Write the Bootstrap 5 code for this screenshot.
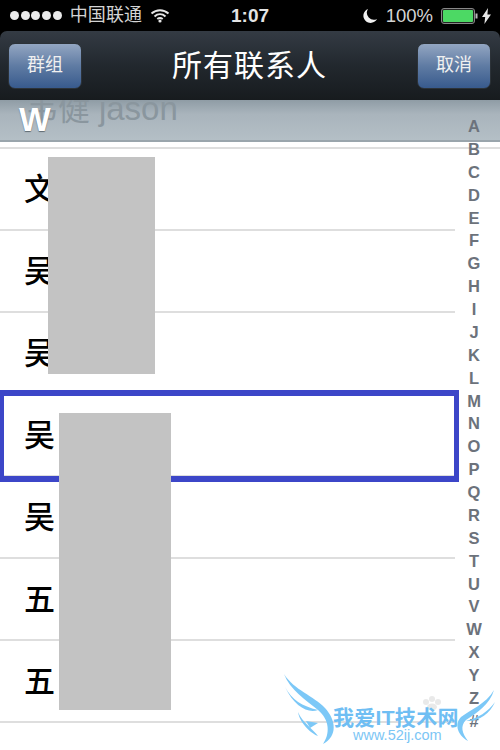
<!DOCTYPE html>
<html lang="zh-CN">
  <head>
    <meta charset="UTF-8" />
    <meta name="viewport" content="width=device-width, initial-scale=1.0" />
    <title>所有联系人</title>
    <link
      href="https://cdn.jsdelivr.net/npm/bootstrap@5.3.0/dist/css/bootstrap.min.css"
      rel="stylesheet"
    />
    <style>
      html, body { height: 750px; overflow: hidden; }
      body {
        position: relative;
        background: #fff;
        font-family: "Liberation Sans", "Noto Sans CJK SC", sans-serif;
      }
      .status-bar {
        height: 31px;
        background: #000;
        color: #d4d4d4;
        padding: 0 9px 0 10px;
        font-size: 18px;
      }
      .sig-dots { display: flex; gap: 1.7px; }
      .sig-dot { width: 9px; height: 9px; border-radius: 50%; background: #eaeaea; }
      .carrier { margin-left: 8px; letter-spacing: 0.1px; }
      .clock-text {
        position: absolute; left: 0; right: 0; top: 3px;
        text-align: center; font-size: 19px; font-weight: 700; color: #e4e4e4; line-height: 26px;
      }
      .pct-text { font-size: 18.5px; }
      .top-bar { height: 69px; background: #000; }
      .top-bar-inner {
        height: 69px;
        padding: 0 9px 0 8px;
        border-radius: 7px 7px 0 0;
        background: linear-gradient(#343b44, #22282e 50%, #171b1e);
      }
      .bar-btn {
        width: 74px; height: 46px;
        border: 1px solid #2c3238;
        border-radius: 7px;
        background: linear-gradient(#93a6c2, #5f7ba3 50%, #385a8d);
        color: #f0f0f0;
        font-size: 18px;
        padding: 0;
      }
      .bar-title { color: #fff; font-size: 30px; line-height: 40px; letter-spacing: 1px; }
      .section-head {
        height: 42px;
        overflow: hidden;
        position: relative;
        background: linear-gradient(#8f9ca5, #a9b4bc 35%, #b4bfc6);
        border-bottom: 2px solid #9aa5ac;
      }
      .ghost-name {
        position: absolute; left: 26px; top: -11px;
        font-size: 32px; line-height: 40px; color: #8a969e;
        white-space: nowrap;
      }
      .ghost-name span { font-size: 33px; }
      .section-letter {
        position: absolute; left: 19px; top: 1px;
        font-size: 33.5px; font-weight: 700; line-height: 38px;
        color: #fff; text-shadow: 0 1px 1px #5f6a72;
      }
      .contact-list { margin-top: 5px; border-top: 2px solid #dedede; }
      .contact-row {
        height: 82px;
        margin-right: 45px;
        padding: 1px 0 0 24px;
        font-size: 31px;
        font-weight: 500;
        line-height: 40px;
        color: #000;
        white-space: nowrap;
        border-bottom: 2px solid #dedede;
      }
      .contact-row.row-low { padding-top: 7px; }
      .picked-box {
        position: absolute; left: 0; top: 390px;
        width: 459px; height: 92px;
        border: 6px solid #3c46c8;
        border-left-width: 4px;
        border-right-width: 5px;
      }
      .blank-a, .blank-b { position: absolute; background: #c3c3c3; }
      .blank-a { left: 48px; top: 157px; width: 107px; height: 217px; }
      .blank-b { left: 59px; top: 413px; width: 112px; height: 297px; }
      .index-col {
        position: absolute; left: 459px; width: 30px; top: 115px;
        font-size: 16.5px; font-weight: 700; line-height: 22.88px;
        text-align: center; color: #6c727b;
      }
      .mark-wings { position: absolute; left: 280px; top: 670px; }
      .mark-title {
        position: absolute; left: 333px; top: 704px;
        font-size: 21px; font-weight: 700; line-height: 28px; letter-spacing: 0.3px;
        color: #6fbef3; white-space: nowrap;
      }
      .mark-url {
        position: absolute; left: 353px; top: 726px;
        font-size: 14.5px; line-height: 18px;
        color: #7cc6f5; white-space: nowrap;
      }
    </style>
  </head>
  <body>
    <div class="status-bar d-flex align-items-center">
      <div class="sig-dots">
        <span class="sig-dot"></span><span class="sig-dot"></span><span class="sig-dot"></span><span class="sig-dot"></span><span class="sig-dot"></span>
      </div>
      <span class="carrier">中国联通</span>
      <svg class="ms-2" width="20" height="15" viewBox="0 0 20 15">
        <path d="M1.5 5.5C6.5 1 13.5 1 18.5 5.5M4.5 8.5C7.8 5.6 12.2 5.6 15.5 8.5M7.3 11C8.9 9.8 11.1 9.8 12.7 11" fill="none" stroke="#e6e6e6" stroke-width="2"/>
        <circle cx="10" cy="13" r="1.6" fill="#e6e6e6"/>
      </svg>
      <div class="clock-text">1:07</div>
      <div class="ms-auto d-flex align-items-center">
        <svg width="16" height="16" viewBox="0 0 16 16">
          <path d="M6 1A7.2 7.2 0 1 0 15 11 7 7 0 0 1 6 1Z" fill="#f0f0f0"/>
        </svg>
        <span class="ms-2 pct-text">100%</span>
        <svg class="ms-2" width="37" height="16" viewBox="0 0 37 16">
          <rect x="0.5" y="0.5" width="33" height="15" rx="2.5" fill="#222" stroke="#888"/>
          <rect x="2" y="2" width="30" height="12" rx="1" fill="#4cd964"/>
          <rect x="34.5" y="5.5" width="2" height="5" fill="#bbb"/>
        </svg>
        <svg class="ms-1" width="9" height="16" viewBox="0 0 9 16">
          <path d="M6 0 0 9h3.2L2.4 16 9 6.5H5.4Z" fill="#e8e8e8"/>
        </svg>
      </div>
    </div>

    <div class="top-bar">
      <div class="top-bar-inner d-flex align-items-center justify-content-between">
        <button class="btn bar-btn" type="button">群组</button>
        <div class="bar-title">所有联系人</div>
        <button class="btn bar-btn" type="button">取消</button>
      </div>
    </div>

    <div class="section-head">
      <div class="ghost-name">韦健 <span>jason</span></div>
      <div class="section-letter">W</div>
    </div>

    <div class="contact-list">
      <div class="contact-row d-flex align-items-center">文</div>
      <div class="contact-row d-flex align-items-center">吴</div>
      <div class="contact-row d-flex align-items-center">吴</div>
      <div class="contact-row d-flex align-items-center">吴</div>
      <div class="contact-row d-flex align-items-center">吴</div>
      <div class="contact-row d-flex align-items-center">五</div>
      <div class="contact-row d-flex align-items-center">五</div>
      <div class="contact-row row-low d-flex align-items-center">吴伟</div>
    </div>

    <div class="picked-box"></div>
    <div class="blank-a"></div>
    <div class="blank-b"></div>

    <div class="index-col">
      <div>A</div><div>B</div><div>C</div><div>D</div><div>E</div><div>F</div><div>G</div><div>H</div><div>I</div><div>J</div><div>K</div><div>L</div><div>M</div><div>N</div><div>O</div><div>P</div><div>Q</div><div>R</div><div>S</div><div>T</div><div>U</div><div>V</div><div>W</div><div>X</div><div>Y</div><div>Z</div><div>#</div>
    </div>

    <svg class="mark-wings" width="220" height="80" viewBox="0 0 220 80">
      <g fill="#e9e9e9">
        <circle cx="146" cy="32" r="3"/><circle cx="152" cy="29" r="3"/><circle cx="158" cy="32" r="3"/><ellipse cx="152" cy="37" rx="5" ry="3.5"/>
      </g>
      <g fill="#7cc8f7">
        <path d="M4 4C14 20 34 26 45 38 56 50 58 66 43 74 50 64 50 50 38 40 26 30 10 20 4 4Z"/>
        <path d="M5 17C12 30 22 36 38 40 28 44 14 36 5 17Z"/>
        <path d="M18 42C22 52 34 60 38 66 32 64 20 54 18 42Z"/>
        <path d="M26 51 38 53 30 58Z"/>
        <path d="M214 20C206 34 190 40 181 47 175 53 176 64 188 71 182 63 180 56 186 50 198 42 210 34 214 20Z"/>
        <path d="M215 32C208 42 198 48 186 51 198 52 210 44 215 32Z"/>
      </g>
    </svg>
    <div class="mark-title">我爱IT技术网</div>
    <div class="mark-url">www.52ij.com</div>

    <script src="https://cdn.jsdelivr.net/npm/bootstrap@5.3.0/dist/js/bootstrap.bundle.min.js"></script>
  </body>
</html>
